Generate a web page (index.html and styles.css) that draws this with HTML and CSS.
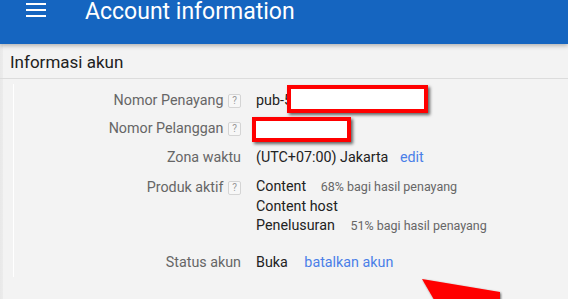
FILE: index.html
```html
<!DOCTYPE html>
<html>
<head>
<meta charset="utf-8">
<link rel="stylesheet" href="styles.css">
</head>
<body>
<header class="topbar">
  <div class="menu"><span></span><span></span><span></span></div>
  <h1 class="title">Account information</h1>
</header>
<div class="subbar">Informasi akun</div>
<main class="content">
  <div class="rows">
    <div class="row r1">
      <div class="label">Nomor Penayang <span class="help">?</span></div>
      <div class="value">pub-5</div>
    </div>
    <div class="row r2">
      <div class="label">Nomor Pelanggan <span class="help">?</span></div>
      <div class="value">&nbsp;</div>
    </div>
    <div class="row r3">
      <div class="label">Zona waktu</div>
      <div class="value">(UTC+07:00) Jakarta <a class="link edit">edit</a></div>
    </div>
    <div class="row r4">
      <div class="label">Produk aktif <span class="help">?</span></div>
      <div class="value products">
        <div>Content <span class="note n1">68% bagi hasil penayang</span></div>
        <div>Content host</div>
        <div>Penelusuran <span class="note n2">51% bagi hasil penayang</span></div>
      </div>
    </div>
    <div class="row r5">
      <div class="label">Status akun</div>
      <div class="value">Buka <a class="link cancel">batalkan akun</a></div>
    </div>
  </div>
</main>
<div class="redact box1"></div>
<div class="redact box2"></div>
<svg class="arrow" width="100" height="30" viewBox="0 0 100 30">
  <defs>
    <filter id="sh" x="-20%" y="-50%" width="140%" height="200%">
      <feDropShadow dx="1" dy="1" stdDeviation="1.2" flood-color="#000" flood-opacity="0.55"/>
    </filter>
  </defs>
  <polygon points="2,9 80,22 80,40 20,40" fill="#ff0000" filter="url(#sh)"/>
</svg>
</body>
</html>
```
FILE: styles.css
```css
html, body {
  margin: 0;
  padding: 0;
}
body {
  width: 568px;
  height: 299px;
  overflow: hidden;
  background: linear-gradient(to right, #e8e8e8 0, #ececec 3px, #f3f3f3 3px) no-repeat;
  background-color: #f3f3f3;
  font-family: Roboto, "Liberation Sans", Arial, sans-serif;
  position: relative;
}
.topbar {
  height: 44px;
  background: #1565c0;
  display: flex;
  align-items: flex-start;
  position: relative;
  z-index: 2;
  box-shadow: 0 2px 4px rgba(0,0,0,0.25);
}
.menu {
  margin-left: 26px;
  margin-top: 3px;
  width: 20px;
  display: flex;
  flex-direction: column;
  gap: 4px;
}
.menu span {
  display: block;
  height: 2px;
  background: #fff;
}
.title {
  margin: 0 0 0 39px;
  color: #fff;
  font-weight: 400;
  font-size: 23px;
  line-height: 24px;
}
.subbar {
  height: 34px;
  border-bottom: 1px solid #dcdcdc;
  padding-left: 10px;
  font-size: 17px;
  line-height: 36px;
  color: #212121;
}
.content {
  margin-left: 13px;
  border-left: 1px solid #ffffff;
  margin-top: 5px;
  height: 193px;
}
.rows {
  padding-top: 6px;
}
.row {
  display: flex;
  font-size: 14.3px;
  line-height: 20px;
}
.label {
  width: 227px;
  text-align: right;
  color: #666;
  flex: none;
}
.value {
  margin-left: 15px;
  color: #222;
}
.help {
  display: inline-block;
  width: 11px;
  height: 12px;
  border: 1px solid #d4d4d4;
  border-radius: 2px;
  font-size: 10px;
  line-height: 12px;
  text-align: center;
  color: #999;
  vertical-align: 1px;
  margin-left: 1px;
  background: #f7f7f7;
}
.r2 { margin-top: 8px; }
.r3 { margin-top: 9px; }
.r4 { margin-top: 10px; }
.r5 { margin-top: 16px; }
.products { line-height: 19.5px; }
.note {
  font-size: 12.5px;
  color: #666;
}
.n1 { margin-left: 11px; }
.n2 { margin-left: 12px; }
.link {
  color: #4a7fe8;
  text-decoration: none;
}
.edit { margin-left: 8px; }
.cancel { margin-left: 13px; }
.redact {
  position: absolute;
  background: #fff;
  border: 4px solid #ff0000;
  box-sizing: border-box;
  box-shadow: 2px 2px 3px rgba(0,0,0,0.6);
  z-index: 3;
}
.box1 { left: 287px; top: 85px; width: 141px; height: 28px; }
.box2 { left: 252px; top: 117px; width: 99px; height: 25px; }
.arrow {
  position: absolute;
  left: 420px;
  top: 270px;
  z-index: 3;
}
```
